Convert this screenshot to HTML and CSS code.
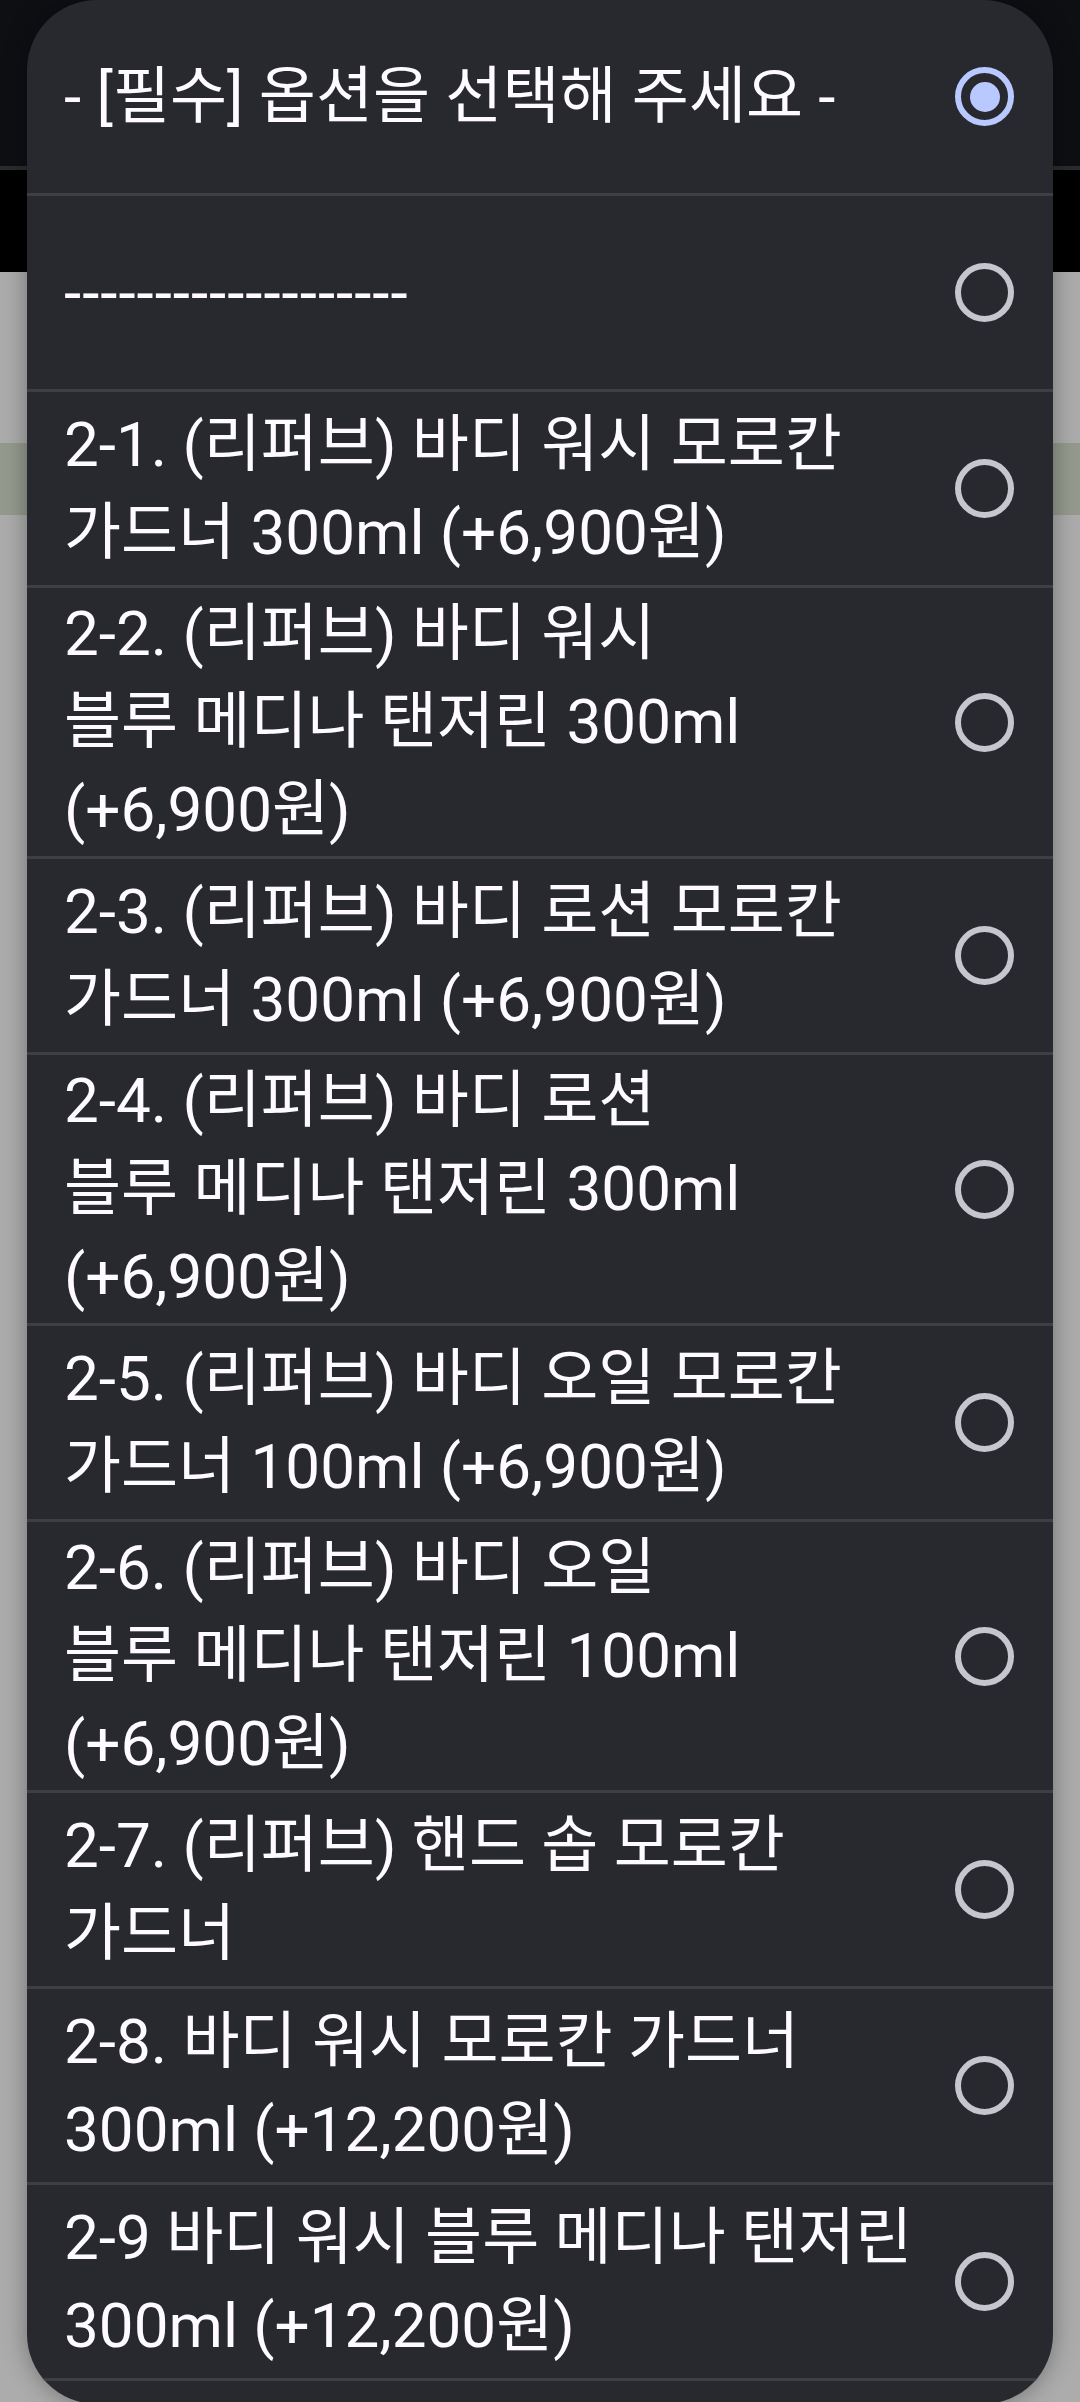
FILE: index.html
```html
<!DOCTYPE html>
<html lang="ko">
<head>
  <meta charset="UTF-8">
  <meta name="viewport" content="width=device-width, initial-scale=1.0">
  <title>옵션 선택</title>
  <link rel="stylesheet" href="styles.css">
</head>
<body>

  <div class="backdrop">
    <div class="appbar"></div>
    <div class="tabs"></div>
    <div class="page">
      <div class="page-gap"></div>
      <div class="page-band"></div>
    </div>
  </div>

  <div class="dialog">
    <ul class="options">
      <li class="option selected">
        <span class="label">- [필수] 옵션을 선택해 주세요 -</span>
        <span class="radio"></span>
      </li>
      <li class="option">
        <span class="label dashes">-------------------</span>
        <span class="radio"></span>
      </li>
      <li class="option">
        <span class="label">2-1. (리퍼브) 바디 워시 모로칸 가드너 300ml (+6,900원)</span>
        <span class="radio"></span>
      </li>
      <li class="option">
        <span class="label">2-2. (리퍼브) 바디 워시<br>블루 메디나 탠저린 300ml (+6,900원)</span>
        <span class="radio"></span>
      </li>
      <li class="option">
        <span class="label">2-3. (리퍼브) 바디 로션 모로칸 가드너 300ml (+6,900원)</span>
        <span class="radio"></span>
      </li>
      <li class="option">
        <span class="label">2-4. (리퍼브) 바디 로션<br>블루 메디나 탠저린 300ml (+6,900원)</span>
        <span class="radio"></span>
      </li>
      <li class="option">
        <span class="label">2-5. (리퍼브) 바디 오일 모로칸 가드너 100ml (+6,900원)</span>
        <span class="radio"></span>
      </li>
      <li class="option">
        <span class="label">2-6. (리퍼브) 바디 오일<br>블루 메디나 탠저린 100ml (+6,900원)</span>
        <span class="radio"></span>
      </li>
      <li class="option">
        <span class="label">2-7. (리퍼브) 핸드 솝 모로칸 가드너</span>
        <span class="radio"></span>
      </li>
      <li class="option">
        <span class="label">2-8. 바디 워시 모로칸 가드너 300ml (+12,200원)</span>
        <span class="radio"></span>
      </li>
      <li class="option">
        <span class="label">2-9 바디 워시 블루 메디나 탠저린 300ml (+12,200원)</span>
        <span class="radio"></span>
      </li>
      <li class="option">
        <span class="label">2-10. 바디 로션 모로칸 가드너 300ml (+12,200원)</span>
        <span class="radio"></span>
      </li>
    </ul>
  </div>

</body>
</html>
```

FILE: styles.css
```css
* {
  margin: 0;
  padding: 0;
  box-sizing: border-box;
}

body {
  width: 1080px;
  height: 2402px;
  overflow: hidden;
  position: relative;
  background: #acacac;
  font-family: Roboto, "Noto Sans CJK KR", sans-serif;
}

/* dimmed page behind the dialog */
.backdrop {
  display: flex;
  flex-direction: column;
  height: 100%;
}

.appbar {
  height: 170px;
  background: #0e0f13;
  border-bottom: 4px solid #2b2c30;
}

.tabs {
  height: 102px;
  background: #000;
}

.page {
  flex: 1;
  background: #acacac;
}

.page-gap {
  height: 171px;
}

.page-band {
  height: 72px;
  background: #959a8e;
}

/* option dialog */
.dialog {
  position: absolute;
  left: 27px;
  top: 0;
  width: 1026px;
  height: 2404px;
  background: #28292e;
  border-radius: 70px;
  overflow: hidden;
  box-shadow: 0 0 24px rgba(0, 0, 0, 0.35);
}

.options {
  list-style: none;
}

.option {
  display: flex;
  align-items: center;
  gap: 10px;
  min-height: 196px;
  padding: 2px 39px 2px 37px;
  border-bottom: 3px solid #3e3f44;
}

.label {
  flex: 1;
  font-size: 62px;
  line-height: 88px;
  color: #fdfbff;
  word-break: keep-all;
}

.dashes {
  letter-spacing: 1px;
}

.radio {
  flex: none;
  width: 59px;
  height: 59px;
  border: 6px solid #c6c6cf;
  border-radius: 50%;
  display: flex;
  align-items: center;
  justify-content: center;
}

.selected .radio {
  border-color: #b9c8ff;
}

.selected .radio::after {
  content: "";
  width: 30px;
  height: 30px;
  border-radius: 50%;
  background: #b9c8ff;
}
```
